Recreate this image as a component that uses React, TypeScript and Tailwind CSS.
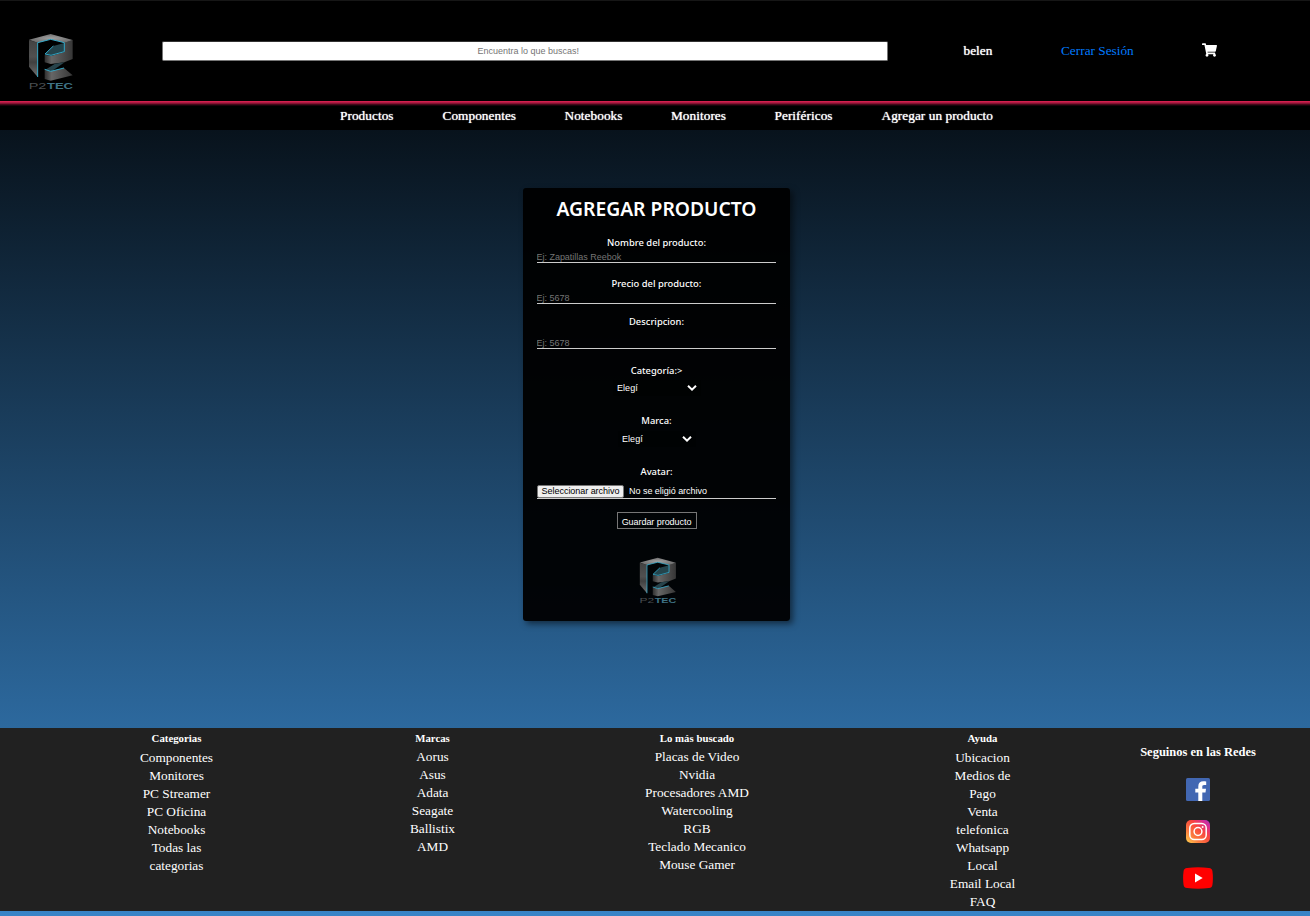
import React from 'react';
import { FaShoppingCart } from 'react-icons/fa';

const serif = "font-['Liberation_Serif','Times_New_Roman',serif]";
const arial = "font-['Liberation_Sans',Arial,sans-serif]";

function Logo({ id, className }: { id: string; className: string }) {
  return (
    <svg viewBox="84 99 138 171" className={className} preserveAspectRatio="none">
      <defs>
        <linearGradient id={`${id}-side`} x1="0" y1="0" x2="0" y2="1">
          <stop offset="0" stopColor="#424242" />
          <stop offset="0.45" stopColor="#505050" />
          <stop offset="0.6" stopColor="#404040" />
          <stop offset="1" stopColor="#707070" />
        </linearGradient>
        <linearGradient id={`${id}-band`} x1="0" y1="0" x2="1" y2="0">
          <stop offset="0" stopColor="#303030" />
          <stop offset="0.25" stopColor="#666" />
          <stop offset="1" stopColor="#363636" />
        </linearGradient>
        <radialGradient id={`${id}-top`}>
          <stop offset="0" stopColor="#a0a0a0" />
          <stop offset="1" stopColor="#707070" />
        </radialGradient>
      </defs>
      <polygon points="87,120 113,128 113,231 87,200" fill={`url(#${id}-side)`} />
      <polygon points="193,128 218,120 218,177 193,187 152,192 134,187 134,164 153,168 193,156" fill={`url(#${id}-band)`} />
      <polygon points="87,119 152,102 218,120 194,128 152,118 113,128" fill={`url(#${id}-top)`} />
      <polygon points="135,162 160,138 193,129 193,155 153,166" fill="#24444c" />
      <polygon points="136,209 165,191 194,187 155,214" fill="#27434b" />
      <polygon points="134,208 152,214 192,204 218,226 152,242 134,237" fill={`url(#${id}-band)`} />
      <path d="M113 231V128L152 118L193 128V155L153 166L135 162L160 138M134 208L152 214L192 204" fill="none" stroke="#35b0d2" strokeWidth="2.8" />
      <text x="86" y="266" fontSize="25" textLength="53" lengthAdjust="spacingAndGlyphs" fill="#4b4f52" fontFamily="Liberation Sans">P2</text>
      <text x="141" y="266" fontSize="25" fontWeight="bold" textLength="78" lengthAdjust="spacingAndGlyphs" fill="#3f7386" fontFamily="Liberation Sans">TEC</text>
    </svg>
  );
}

function Facebook() {
  return (
    <svg viewBox="0 0 24 23" className="h-[23px] w-6">
      <rect width="24" height="23" rx="1.5" fill="#4267b2" />
      <path d="M12.3 23V14.4H9.3V10.8H12.3V8.2C12.3 5 14.3 3.2 17.4 3.2C18.7 3.2 19.8 3.3 20.2 3.4V6.9H18.2C16.6 6.9 16.3 7.7 16.3 8.7V10.8H20L19.5 14.4H16.3V23Z" fill="#fff" />
    </svg>
  );
}

function Instagram() {
  return (
    <svg viewBox="0 0 24 23" className="h-[23px] w-6">
      <defs>
        <linearGradient id="ig" x1="0" y1="1" x2="1" y2="0">
          <stop offset="0" stopColor="#ffd54f" />
          <stop offset="0.3" stopColor="#fb7a3e" />
          <stop offset="0.6" stopColor="#f8443f" />
          <stop offset="0.82" stopColor="#d92d90" />
          <stop offset="1" stopColor="#a435c8" />
        </linearGradient>
      </defs>
      <rect width="24" height="23" rx="5" fill="url(#ig)" />
      <g fill="none" stroke="#fff" strokeWidth="1.5">
        <rect x="3.8" y="3.5" width="16.4" height="16" rx="4.5" />
        <circle cx="12" cy="11.5" r="3.9" />
      </g>
      <circle cx="16.6" cy="7" r="1" fill="#fff" />
    </svg>
  );
}

function Youtube() {
  return (
    <svg viewBox="0 0 30 22" className="h-[22px] w-[30px]">
      <path d="M4 .9Q15 -.3 26 .9Q29 1.2 29.4 4Q30.4 11 29.4 18Q29 20.8 26 21.1Q15 22.3 4 21.1Q1 20.8.6 18Q-.4 11 .6 4Q1 1.2 4 .9Z" fill="#f00" />
      <path d="M12 6.5L19.7 11L12 15.5Z" fill="#fff" />
    </svg>
  );
}

function Chevron() {
  return (
    <svg viewBox="0 0 10 6" className="h-[6px] w-[10px]">
      <path d="M1 .8L5 4.6L9 .8" fill="none" stroke="#fff" strokeWidth="2" />
    </svg>
  );
}

function Label({ children }: { children: React.ReactNode }) {
  return <div className="h-[14px] text-center text-[9.4px] leading-[14px] whitespace-nowrap">{children}</div>;
}

function Field({ placeholder }: { placeholder: string }) {
  return (
    <input
      placeholder={placeholder}
      className={`${arial} block h-[13px] w-full border-b border-[#ccc] bg-transparent p-0 pt-px -indent-[0.5px] text-[9px] leading-3 tracking-[-0.02px] outline-none placeholder:text-[#757575]`}
    />
  );
}

function Select({ width }: { width: string }) {
  return (
    <button type="button" className={`${arial} ${width} mx-auto flex h-4 items-center justify-between bg-black/30 pr-1 pl-[4.5px] text-[9px] tracking-[0.05px]`}>
      <span className="pt-px">Elegí</span>
      <Chevron />
    </button>
  );
}

const navItems = [
  { label: 'Productos', style: 'w-[102.5px]' },
  { label: 'Componentes', style: 'w-[122px]' },
  { label: 'Notebooks', style: 'w-[106.5px]' },
  { label: 'Monitores', style: 'w-[103.5px]' },
  { label: 'Periféricos', style: 'w-[107px]' },
  { label: 'Agregar un producto', style: 'w-[120px]' },
];

const columns = [
  { title: 'Categorias', width: 'w-[353px]', gap: 'pt-[3px]', items: ['Componentes', 'Monitores', 'PC Streamer', 'PC Oficina', 'Notebooks', 'Todas las', 'categorias'] },
  { title: 'Marcas', width: 'w-[159px]', gap: 'pt-[2px]', items: ['Aorus', 'Asus', 'Adata', 'Seagate', 'Ballistix', 'AMD'] },
  { title: 'Lo más buscado', width: 'w-[370px]', gap: 'pt-[2px]', items: ['Placas de Video', 'Nvidia', 'Procesadores AMD', 'Watercooling', 'RGB', 'Teclado Mecanico', 'Mouse Gamer'] },
  { title: 'Ayuda', width: 'w-[201px]', gap: 'pt-[3px]', items: ['Ubicacion', 'Medios de', 'Pago', 'Venta', 'telefonica', 'Whatsapp', 'Local', 'Email Local', 'FAQ'] },
];

export default function App() {
  return (
    <div className={`${serif} flex h-[916px] w-[1310px] flex-col overflow-hidden bg-[linear-gradient(to_bottom,#000,#3884c7)] text-[13.3px] text-white`}>
      <header className="flex h-[101px] shrink-0 items-start border-t border-[#161616] bg-black">
        <Logo id="head" className="mt-8 ml-7 h-[57px] w-[46px]" />
        <input
          placeholder="Encuentra lo que buscas!"
          className={`${arial} mt-10 ml-[87.5px] h-5 w-[726.5px] rounded-[2px] border border-[#767676] border-t-[#333] bg-white pl-[7px] text-center text-[9px] text-black outline-none placeholder:text-[#757575]`}
        />
        <span className="mt-[41px] ml-[75.5px] w-[97.5px] leading-[18px] [text-shadow:0_0_1px_#fff]">belen</span>
        <a className="mt-[41px] w-[140.5px] leading-[18px] text-[#007bff]">Cerrar Sesión</a>
        <FaShoppingCart className="mt-[42px] h-[14px] w-[15px]" />
      </header>
      <nav className="flex h-[29px] shrink-0 bg-[linear-gradient(to_bottom,#d4204e_0px,#d4204e_1px,#b01a43_1px,#b01a43_2px,#841231_2px,#841231_3px,#430919_3px,#430919_4px,#1b040b_4px,#1b040b_5px,#000_5px)] bg-black pl-[340px]">
        {navItems.map((item) => (
          <a key={item.label} className={`${item.style} mt-[6px] leading-[18px] tracking-[0.04px] whitespace-nowrap [text-shadow:0_0_1px_#fff]`}>
            {item.label}
          </a>
        ))}
      </nav>

      <main className="flex h-[598px] shrink-0 items-start pt-[58px] pl-[523px]">
        <form className="h-[433px] w-[267px] rounded-[3px] bg-black/95 px-[14px] font-['Noto_Sans','Open_Sans',sans-serif] font-medium shadow-[3px_3px_6px_rgba(0,0,0,0.5)]">
          <h1 className="pt-[7px] text-center text-[19.3px] leading-7 font-semibold whitespace-nowrap">AGREGAR PRODUCTO</h1>
          <div className="pt-[13px]">
            <Label>Nombre del producto:</Label>
            <Field placeholder="Ej: Zapatillas Reebok" />
          </div>
          <div className="pt-[14px]">
            <Label>Precio del producto:</Label>
            <Field placeholder="Ej: 5678" />
          </div>
          <div className="flex flex-col gap-[7px] pt-[11px]">
            <Label>Descripcion:</Label>
            <Field placeholder="Ej: 5678" />
          </div>
          <div className="pt-[15px]">
            <Label>Categoría:&gt;</Label>
            <div className="pt-[2px]"><Select width="w-[88px]" /></div>
          </div>
          <div className="pt-[18px]">
            <Label>Marca:</Label>
            <div className="pt-[3px]"><Select width="w-[78px]" /></div>
          </div>
          <div className="pt-[18px]">
            <Label>Avatar:</Label>
          </div>
          <div className={`${arial} mt-[6px] flex h-[14px] items-start gap-[5px] border-b border-[#ccc] text-[9px] leading-[11px] font-normal whitespace-nowrap`}>
            <button type="button" className="h-[13px] w-[87px] rounded-[2px] border border-[#767676] bg-[#efefef] leading-[11px] tracking-[-0.04px] text-black">Seleccionar archivo</button>
            <span className="pt-px tracking-[-0.03px]">No se eligió archivo</span>
          </div>
          <button type="button" className={`${arial} mx-auto mt-[13px] block h-[17px] w-20 border border-[#767676] pt-[3px] text-[9px] leading-[12px] font-normal tracking-[-0.05px] whitespace-nowrap`}>Guardar producto</button>
          <Logo id="card" className="mx-auto mt-7 ml-[101.5px] h-[47px] w-[38px]" />
        </form>
      </main>

      <footer className="flex h-[183px] shrink-0 bg-[#212121] text-center">
        {columns.map((col) => (
          <section key={col.title} className={col.width}>
            <h2 className="pt-[2px] text-[10.8px] leading-4 font-bold">{col.title}</h2>
            <ul className={col.gap}>
              {col.items.map((item) => (
                <li key={item} className="h-[18px] leading-[18px]">{item}</li>
              ))}
            </ul>
          </section>
        ))}
        <section className="flex w-[227px] flex-col items-center pl-[3px]">
          <h2 className="pt-[15px] text-[12.5px] leading-[18px] font-bold whitespace-nowrap">Seguinos en las Redes</h2>
          <div className="flex flex-col items-center pt-[17px]">
            <Facebook />
            <div className="pt-[19px] pb-6"><Instagram /></div>
            <Youtube />
          </div>
        </section>
      </footer>
    </div>
  );
}
